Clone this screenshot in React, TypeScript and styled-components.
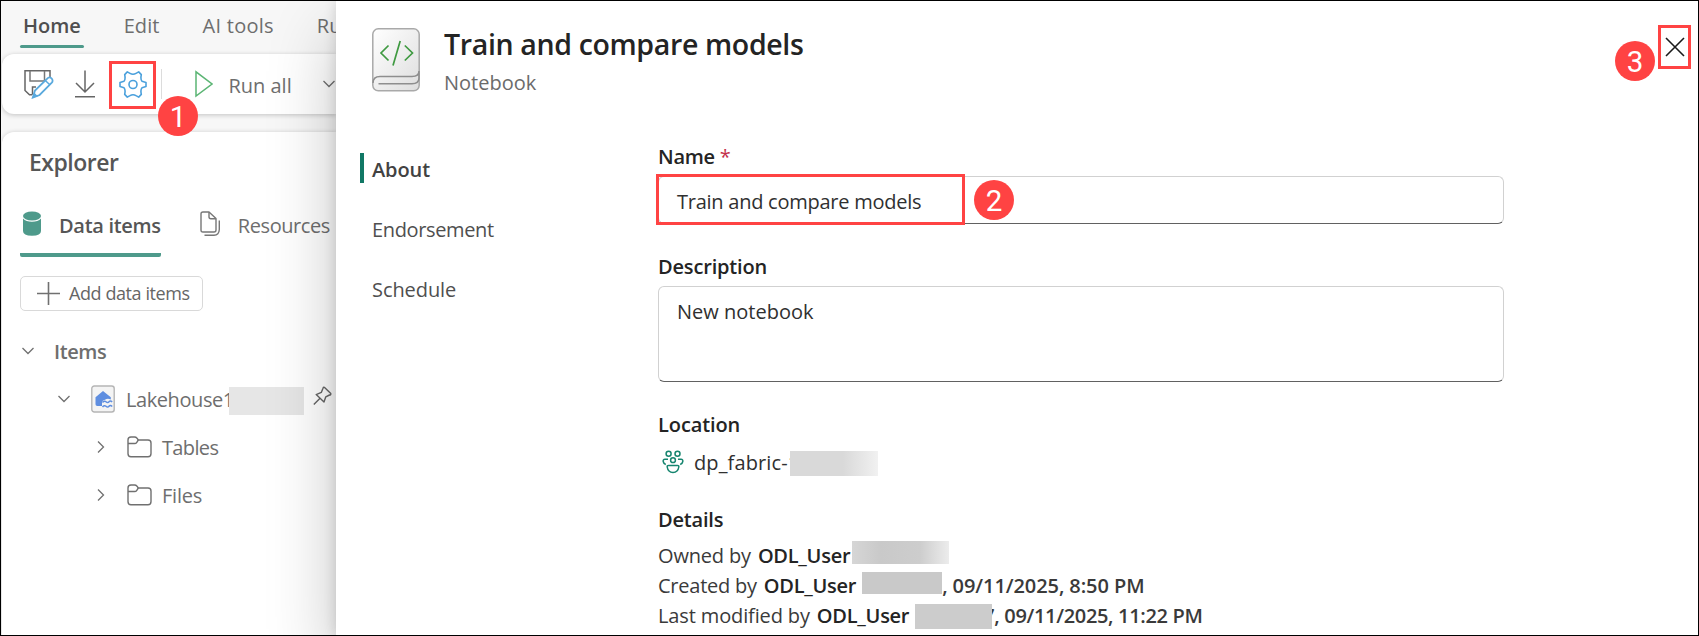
import React from 'react';
import styled, { createGlobalStyle } from 'styled-components';

const GlobalStyle = createGlobalStyle`
  * { box-sizing: border-box; }
  body { margin: 0; font-family: "Open Sans", "Noto Sans", sans-serif; font-size: 20px; line-height: 30px; }
  svg { display: block; flex: none; }
`;

const Screen = styled.div`
  display: flex;
  width: 1699px;
  height: 636px;
  border: 1px solid #000;
  overflow: hidden;
  background: #f7f7f7;
`;

const Label = styled.span<{ $track?: number; $bold?: boolean }>`
  white-space: pre;
  letter-spacing: ${(p) => p.$track ?? 0}px;
  font-weight: ${(p) => (p.$bold ? 600 : 400)};
`;

/* ---------- workspace behind the panel ---------- */

const Workspace = styled.div`
  flex: none;
  width: 335px;
  display: flex;
  flex-direction: column;
  padding-left: 1px;
  overflow: hidden;
  color: #6e6e6e;
`;

const MenuTabs = styled.nav`
  flex: none;
  display: flex;
  gap: 37px;
  height: 53px;
  padding: 10px 0 0 18px;
`;

const MenuTab = styled.div<{ $active?: boolean }>`
  flex: none;
  height: 38px;
  padding: 0 3px;
  color: ${(p) => (p.$active ? '#4f4f4f' : '#6e6e6e')};
  &::after {
    content: '';
    display: block;
    height: 3px;
    margin: 4px -3px 0;
    border-radius: 2px;
    background: ${(p) => (p.$active ? '#4e9a8b' : 'transparent')};
  }
`;

const Toolbar = styled.div`
  flex: none;
  display: flex;
  align-items: center;
  height: 60px;
  padding-left: 22px;
  border-radius: 12px 0 0 12px;
  background: #fff;
  box-shadow: 0 1px 5px rgba(0, 0, 0, 0.22);
`;

const DownloadSlot = styled.div`
  margin: 0 13px 0 20px;
`;

const SettingsSlot = styled.div`
  display: flex;
  align-items: center;
  justify-content: center;
  width: 49px;
  height: 48px;
  margin-top: 2px;
  padding-bottom: 1px;
  border: 3px solid #ff4343;
`;

const Divider = styled.div`
  width: 1px;
  height: 30px;
  margin: 0 33px 0 5px;
  background: #dcdcdc;
`;

const RunLabel = styled.div`
  width: 97px;
  margin-left: 15px;
  padding-top: 3px;
`;

const Explorer = styled.section`
  flex: 1;
  margin-top: 18px;
  padding-top: 10px;
  border-radius: 12px 0 0 0;
  background: #fff;
  box-shadow: 0 0 4px rgba(0, 0, 0, 0.16);
`;

const ExplorerTitle = styled.h2`
  margin: 0 0 0 27px;
  font-size: 23px;
  line-height: 40px;
  font-weight: 600;
  letter-spacing: -0.49px;
  color: #565656;
`;

const ExplorerTabs = styled.div`
  display: flex;
  gap: 37px;
  margin: 29px 0 0 18px;
`;

const ExplorerTab = styled.div<{ $active?: boolean }>`
  flex: none;
  display: flex;
  align-items: flex-start;
  height: 46px;
  gap: 17px;
  padding-left: ${(p) => (p.$active ? 2 : 1)}px;
  border-radius: 0 0 2px 2px;
  border-bottom: 4px solid ${(p) => (p.$active ? '#4e9a8b' : 'transparent')};
  color: ${(p) => (p.$active ? '#565656' : '#6e6e6e')};
  > svg { margin-top: -1px; }
`;

const AddButton = styled.button`
  display: flex;
  align-items: center;
  gap: 9px;
  width: 183px;
  height: 35px;
  margin: 19px 0 0 18px;
  padding: 0 0 1px 16px;
  border: 1px solid #d9d9d9;
  border-radius: 5px;
  background: #fff;
  color: #666;
  font: 400 18px/26px "Open Sans", sans-serif;
`;

const Tree = styled.div`
  margin-top: 17px;
`;

const TreeRow = styled.div<{ $indent: number }>`
  display: flex;
  align-items: center;
  height: 48px;
  padding-left: ${(p) => p.$indent}px;
`;

const Twisty = styled.div<{ $gap: number }>`
  margin: 0 ${(p) => p.$gap}px 2px 0;
`;

const ItemIcon = styled.div<{ $gap: number }>`
  margin: 0 ${(p) => p.$gap}px 2px 0;
`;

const PinSlot = styled.div`
  margin: -9px 0 0 9px;
`;

/* ---------- masked values ---------- */

const Mask = styled.span<{ $w: number; $h: number; $fill: string; $left?: number; $right?: number; $top?: number }>`
  position: relative;
  flex: none;
  display: inline-block;
  width: ${(p) => p.$w}px;
  height: ${(p) => p.$h}px;
  margin: ${(p) => p.$top ?? 0}px ${(p) => p.$right ?? 0}px 0 ${(p) => p.$left ?? 0}px;
  background: ${(p) => p.$fill};
`;

/* ---------- settings panel ---------- */

const Panel = styled.main`
  position: relative;
  z-index: 1;
  flex: 1;
  padding-top: 23px;
  background: #fff;
  color: #303030;
  box-shadow: 0 0 12px rgba(0, 0, 0, 0.14), 0 32px 64px rgba(0, 0, 0, 0.24);
`;

const PanelHeader = styled.header`
  display: flex;
  gap: 24px;
  height: 117px;
  padding-left: 36px;
`;

const NotebookIconSlot = styled.div`
  padding-top: 4px;
`;

const PanelTitle = styled.h1`
  margin: 0 0 4px;
  font-size: 28.5px;
  line-height: 40px;
  font-weight: 600;
  letter-spacing: -0.35px;
  color: #242424;
`;

const PanelKind = styled.div`
  color: #6b6b6b;
`;

const PanelBody = styled.div`
  display: grid;
  grid-template-columns: 298px 846px;
  padding-left: 24px;
`;

const SideNav = styled.nav`
  display: flex;
  flex-direction: column;
  gap: 30px;
  padding-top: 12px;
`;

const NavItem = styled.div<{ $active?: boolean }>`
  height: 30px;
  padding: 2px 0 0 8px;
  border-left: 4px solid ${(p) => (p.$active ? '#117865' : 'transparent')};
  color: ${(p) => (p.$active ? '#424242' : '#4f4f4f')};
`;

const FieldLabel = styled.div`
  height: 35px;
  padding-top: 1px;
  color: #242424;
`;

const Required = styled.span`
  color: #c4314b;
  margin-left: 5px;
`;

const Field = styled.div<{ $h: number; $pad: number }>`
  position: relative;
  height: ${(p) => p.$h}px;
  padding: ${(p) => p.$pad}px 0 0 18px;
  border: 1px solid #d1d1d1;
  border-bottom-color: #616161;
  border-radius: 6px;
  margin-bottom: 27px;
`;

const LocationRow = styled.div`
  display: flex;
  align-items: center;
  height: 36px;
  margin-bottom: 24px;
  padding-left: 4px;
`;

const LocationName = styled.div`
  display: flex;
  align-items: center;
  margin: 1px 0 0 10px;
`;

const DetailRow = styled.div`
  display: flex;
  height: 30px;
  padding-top: 2px;
  color: #3a3a3a;
`;

const Strong = styled(Label)`
  color: #242424;
  margin-left: 7px;
`;

/* ---------- walkthrough callouts ---------- */

const Outline = styled.div<{ $x: number; $y: number; $w: number; $h: number }>`
  position: absolute;
  left: ${(p) => p.$x}px;
  top: ${(p) => p.$y}px;
  width: ${(p) => p.$w}px;
  height: ${(p) => p.$h}px;
  border: 3px solid #ff4343;
`;

const Step = styled.div<{ $x: number; $y: number }>`
  position: absolute;
  left: ${(p) => p.$x}px;
  top: ${(p) => p.$y}px;
  width: 40px;
  height: 40px;
  border-radius: 50%;
  background: #ff4343;
  color: #fff;
  font: 400 29.5px/42px Roboto, "Open Sans", sans-serif;
  text-align: center;
`;

const CloseButton = styled.div`
  position: absolute;
  left: 1322px;
  top: 24px;
  width: 33px;
  height: 44px;
  display: flex;
  align-items: center;
  justify-content: center;
  border: 3px solid #ff4343;
`;

/* ---------- icons ---------- */

const SaveIcon = () => (
  <svg width="30" height="30" viewBox="0 0 30 30" fill="none" strokeWidth="1.5">
    <path d="M26 10V1.8H1V21.5L5.5 25.8H8M8.5 25.8V18H12" stroke="#666" />
    <path d="M6 2V12H20.5V2" stroke="#777" />
    <path d="M8.8 28.6 11 21.6 23.2 9.6A2.9 2.9 0 0 1 27.8 13.7L15.6 26Z" fill="#fff" stroke="#5aa9dd" strokeWidth="1.8" />
    <path d="M8.5 29 10.3 23.5 13.8 27.2Z" fill="#5aa9dd" />
    <path d="M21.3 11.5 25.8 15.8" stroke="#5aa9dd" />
  </svg>
);

const DownloadIcon = () => (
  <svg width="22" height="30" viewBox="0 0 22 30" fill="none" stroke="#666" strokeWidth="1.5">
    <path d="M11 1.5V22.5M2 14 11 23 20 14M1 27.7H21" />
  </svg>
);

const GearIcon = () => (
  <svg width="28" height="28" viewBox="0 0 28 28" fill="none" stroke="#4aa0dc" strokeWidth="1.6" strokeLinejoin="round">
    <circle cx="14" cy="13.5" r="4" />
    <path d="M8.3.9 11 2.4Q14 4.2 17 2.4L19.7.9 22.3 3.6Q21.3 8.6 23 10.3L27 11.4V15.6L23 16.7Q21.3 18.4 22.3 23.4L19.7 26.1 17 24.6Q14 22.8 11 24.6L8.3 26.1 5.7 23.4Q6.7 18.4 5 16.7L1 15.6V11.4L5 10.3Q6.7 8.6 5.7 3.6Z" />
  </svg>
);

const PlayIcon = () => (
  <svg width="18" height="28" viewBox="0 0 18 28" fill="none" stroke="#5bb574" strokeWidth="1.5">
    <path d="M1 1.8V26L17 14Z" />
  </svg>
);

const ChevronDown = () => (
  <svg width="14" height="8" viewBox="0 0 14 8" fill="none" stroke="#707070" strokeWidth="1.3">
    <path d="M1.5 1 7 6.5 12.5 1" />
  </svg>
);

const ChevronRight = () => (
  <svg width="8" height="14" viewBox="0 0 8 14" fill="none" stroke="#707070" strokeWidth="1.3">
    <path d="M1 1.5 6.5 7 1 12.5" />
  </svg>
);

const DatabaseIcon = () => (
  <svg width="20" height="27" viewBox="0 0 20 27" fill="#4e9a8b">
    <ellipse cx="10" cy="6" rx="9" ry="4.6" />
    <path d="M1 8.5Q4 11.8 10 11.8T19 8.5V21Q19 25.8 10 25.8T1 21Z" />
  </svg>
);

const PagesIcon = () => (
  <svg width="22" height="27" viewBox="0 0 22 27" fill="none" stroke="#777" strokeWidth="1.4" strokeLinejoin="round">
    <path d="M4 2H10L17 8.5V20Q17 22 15 22H4Q2 22 2 20V4Q2 2 4 2Z" />
    <path d="M10 2V7Q10 8.7 12 8.7H17" />
    <path d="M20.3 10.5V19.5Q20 25 15 25.2H5.5" />
  </svg>
);

const PlusIcon = () => (
  <svg width="23" height="23" viewBox="0 0 23 23" stroke="#707070" strokeWidth="1.6">
    <path d="M11.5 0V23M0 11.5H23" />
  </svg>
);

const LakehouseIcon = () => (
  <svg width="24" height="28" viewBox="0 0 24 28" fill="none">
    <rect x="0.8" y="1" width="22.4" height="26" rx="2.5" fill="#f4f4f4" stroke="#b5b5b5" strokeWidth="1.4" />
    <path d="M4.5 12.2 12 6 19.8 12.2V14.5Q16.5 13 14 14.8Q11.5 15 11 17V21H6.3Q4.5 21 4.5 19.2Z" fill="#5f8ee0" />
    <path d="M11.5 17.5Q13.2 15.2 15 16.8T18 16.8 21.2 16.8M11.5 22Q13.2 19.7 15 21.3T18 21.3 21.2 21.5" stroke="#5f8ee0" strokeWidth="1.5" />
  </svg>
);

const PinIcon = () => (
  <svg width="19" height="20" viewBox="0 0 19 20" fill="none" stroke="#666" strokeWidth="1.4" strokeLinejoin="round">
    <path d="M11.3 1.3 17.8 7.6Q18 9 16.5 9L12.8 10.8 11 16 3.2 8.6 8.3 6.4 10 2.2Q10.4 1 11.3 1.3ZM6.8 12.4 0.8 18.6" />
  </svg>
);

const FolderIcon = () => (
  <svg width="25" height="22" viewBox="0 0 25 22" fill="none" stroke="#707070" strokeWidth="1.4" strokeLinejoin="round">
    <path d="M1 4Q1 1 4 1H7.5Q9 1 10 2.2L11.3 4H21Q24 4 24 7V17.5Q24 20.7 21 20.7H4Q1 20.7 1 17.5Z" />
    <path d="M1 7.5H7.5Q9 7.5 9.8 6.3L11.3 4" />
  </svg>
);

const NotebookIcon = () => (
  <svg width="48" height="64" viewBox="0 0 48 64" fill="none">
    <defs>
      <linearGradient id="cover" x1="0" y1="0" x2="1" y2="1">
        <stop offset="0" stopColor="#fff" />
        <stop offset="1" stopColor="#dedede" />
      </linearGradient>
    </defs>
    <rect x="0.8" y="0.8" width="46.4" height="62" rx="5.5" fill="url(#cover)" stroke="#a9a9a9" strokeWidth="1.5" />
    <path d="M1 55Q1 48.5 8 48.5H40Q47 48.5 47 43V50Q47 55.5 40 55.8H6.5" stroke="#8e8e8e" strokeWidth="1.5" />
    <path d="M16.5 17.5 9 25 16.5 32.5M32.8 17.5 40.5 25 32.8 32.5M28.2 13 21 37.5" stroke="#3f9a41" strokeWidth="1.7" />
  </svg>
);

const WorkspaceIcon = () => (
  <svg width="22" height="25" viewBox="0 0 22 25" fill="none" stroke="#16856f" strokeWidth="1.5">
    <circle cx="6.6" cy="3.8" r="2.5" />
    <circle cx="15.5" cy="3.8" r="2.5" />
    <circle cx="11" cy="10.2" r="2.4" />
    <path d="M6 9.3H3Q.8 9.3 1.2 11.5 1.6 13.8 3.8 14.5M16 9.3H19Q21.2 9.3 20.8 11.5 20.4 13.8 18.2 14.5" />
    <path d="M6.5 15.4H15.5Q17 15.4 16.8 17 16 22.4 11 22.4T5.2 17Q5 15.4 6.5 15.4Z" />
  </svg>
);

const CloseIcon = () => (
  <svg width="20" height="20" viewBox="0 0 20 20" stroke="#1a1a1a" strokeWidth="1.6">
    <path d="M1 1 19 19M19 1 1 19" />
  </svg>
);

export default function App() {
  return (
    <>
      <GlobalStyle />
      <Screen>
        <Workspace>
          <MenuTabs>
            <MenuTab $active><Label $bold $track={-0.05}>Home</Label></MenuTab>
            <MenuTab><Label $track={0.1}>Edit</Label></MenuTab>
            <MenuTab><Label $track={0.25}>AI tools</Label></MenuTab>
            <MenuTab><Label>Run</Label></MenuTab>
          </MenuTabs>
          <Toolbar>
            <SaveIcon />
            <DownloadSlot><DownloadIcon /></DownloadSlot>
            <SettingsSlot><GearIcon /></SettingsSlot>
            <Divider />
            <PlayIcon />
            <RunLabel><Label>Run all</Label></RunLabel>
            <ChevronDown />
          </Toolbar>
          <Explorer>
            <ExplorerTitle>Explorer</ExplorerTitle>
            <ExplorerTabs>
              <ExplorerTab $active>
                <DatabaseIcon />
                <Label $bold $track={-0.3}>Data items</Label>
              </ExplorerTab>
              <ExplorerTab>
                <PagesIcon />
                <Label $track={-0.42}>Resources</Label>
              </ExplorerTab>
            </ExplorerTabs>
            <AddButton>
              <PlusIcon />
              <Label $track={-0.42}>Add data items</Label>
            </AddButton>
            <Tree>
              <TreeRow $indent={19}>
                <Twisty $gap={19}><ChevronDown /></Twisty>
                <Label $bold $track={-0.4}>Items</Label>
              </TreeRow>
              <TreeRow $indent={55}>
                <Twisty $gap={20}><ChevronDown /></Twisty>
                <ItemIcon $gap={11}><LakehouseIcon /></ItemIcon>
                <Label $track={-0.42}>Lakehouse1</Label>
                <Mask $w={75} $h={28} $left={-5} $top={2} $fill="#e6e6e6" />
                <PinSlot><PinIcon /></PinSlot>
              </TreeRow>
              <TreeRow $indent={95}>
                <Twisty $gap={22}><ChevronRight /></Twisty>
                <ItemIcon $gap={10}><FolderIcon /></ItemIcon>
                <Label $track={-0.65}>Tables</Label>
              </TreeRow>
              <TreeRow $indent={95}>
                <Twisty $gap={22}><ChevronRight /></Twisty>
                <ItemIcon $gap={10}><FolderIcon /></ItemIcon>
                <Label $track={-0.2}>Files</Label>
              </TreeRow>
            </Tree>
          </Explorer>
        </Workspace>

        <Panel>
          <PanelHeader>
            <NotebookIconSlot><NotebookIcon /></NotebookIconSlot>
            <div>
              <PanelTitle>Train and compare models</PanelTitle>
              <PanelKind><Label>Notebook</Label></PanelKind>
            </div>
          </PanelHeader>
          <PanelBody>
            <SideNav>
              <NavItem $active><Label $bold $track={-0.1}>About</Label></NavItem>
              <NavItem><Label $track={-0.36}>Endorsement</Label></NavItem>
              <NavItem><Label $track={-0.08}>Schedule</Label></NavItem>
            </SideNav>
            <div>
              <FieldLabel><Label $bold $track={-0.28}>Name</Label><Required>*</Required></FieldLabel>
              <Field $h={48} $pad={10}>
                <Label $track={-0.25}>Train and compare models</Label>
                <Outline $x={-3} $y={-3} $w={309} $h={51} />
                <Step $x={315} $y={3}>2</Step>
              </Field>
              <FieldLabel><Label $bold $track={-0.17}>Description</Label></FieldLabel>
              <Field $h={96} $pad={10}>
                <Label>New notebook</Label>
              </Field>
              <FieldLabel><Label $bold $track={-0.1}>Location</Label></FieldLabel>
              <LocationRow>
                <WorkspaceIcon />
                <LocationName>
                  <Label $track={0.12}>dp_fabric-1</Label>
                  <Mask $w={88} $h={25} $left={-9} $top={1} $fill="linear-gradient(90deg, #d9d9d9 60%, #f1f1f1)" />
                </LocationName>
              </LocationRow>
              <FieldLabel><Label $bold $track={-0.2}>Details</Label></FieldLabel>
              <DetailRow>
                <Label $track={-0.17}>Owned by</Label>
                <Strong $bold $track={-0.27}>ODL_User</Strong>
                <Mask $w={97} $h={23} $left={2} $fill="linear-gradient(90deg, #d6d6d6, #c9c9c9 30%, #cdcdcd 70%, #ececec)" />
              </DetailRow>
              <DetailRow>
                <Label $track={-0.24}>Created by</Label>
                <Strong $bold $track={-0.27}>ODL_User</Strong>
                <Mask $w={80} $h={22} $left={6} $top={1} $fill="#c9c9c9" />
                <Label $bold $track={-0.08}>, 09/11/2025, 8:50 PM</Label>
              </DetailRow>
              <DetailRow>
                <Label $track={-0.13}>Last modified by</Label>
                <Strong $bold $track={-0.27}>ODL_User</Strong>
                <Mask $w={77} $h={25} $left={6} $right={-9} $top={3} $fill="#cccccc" />
                <Label $bold $track={-0.33}>7, 09/11/2025, 11:22 PM</Label>
              </DetailRow>
            </div>
          </PanelBody>
          <CloseButton><CloseIcon /></CloseButton>
          <Step $x={1279} $y={40}>3</Step>
          <Step $x={-178} $y={95}>1</Step>
        </Panel>
      </Screen>
    </>
  );
}
